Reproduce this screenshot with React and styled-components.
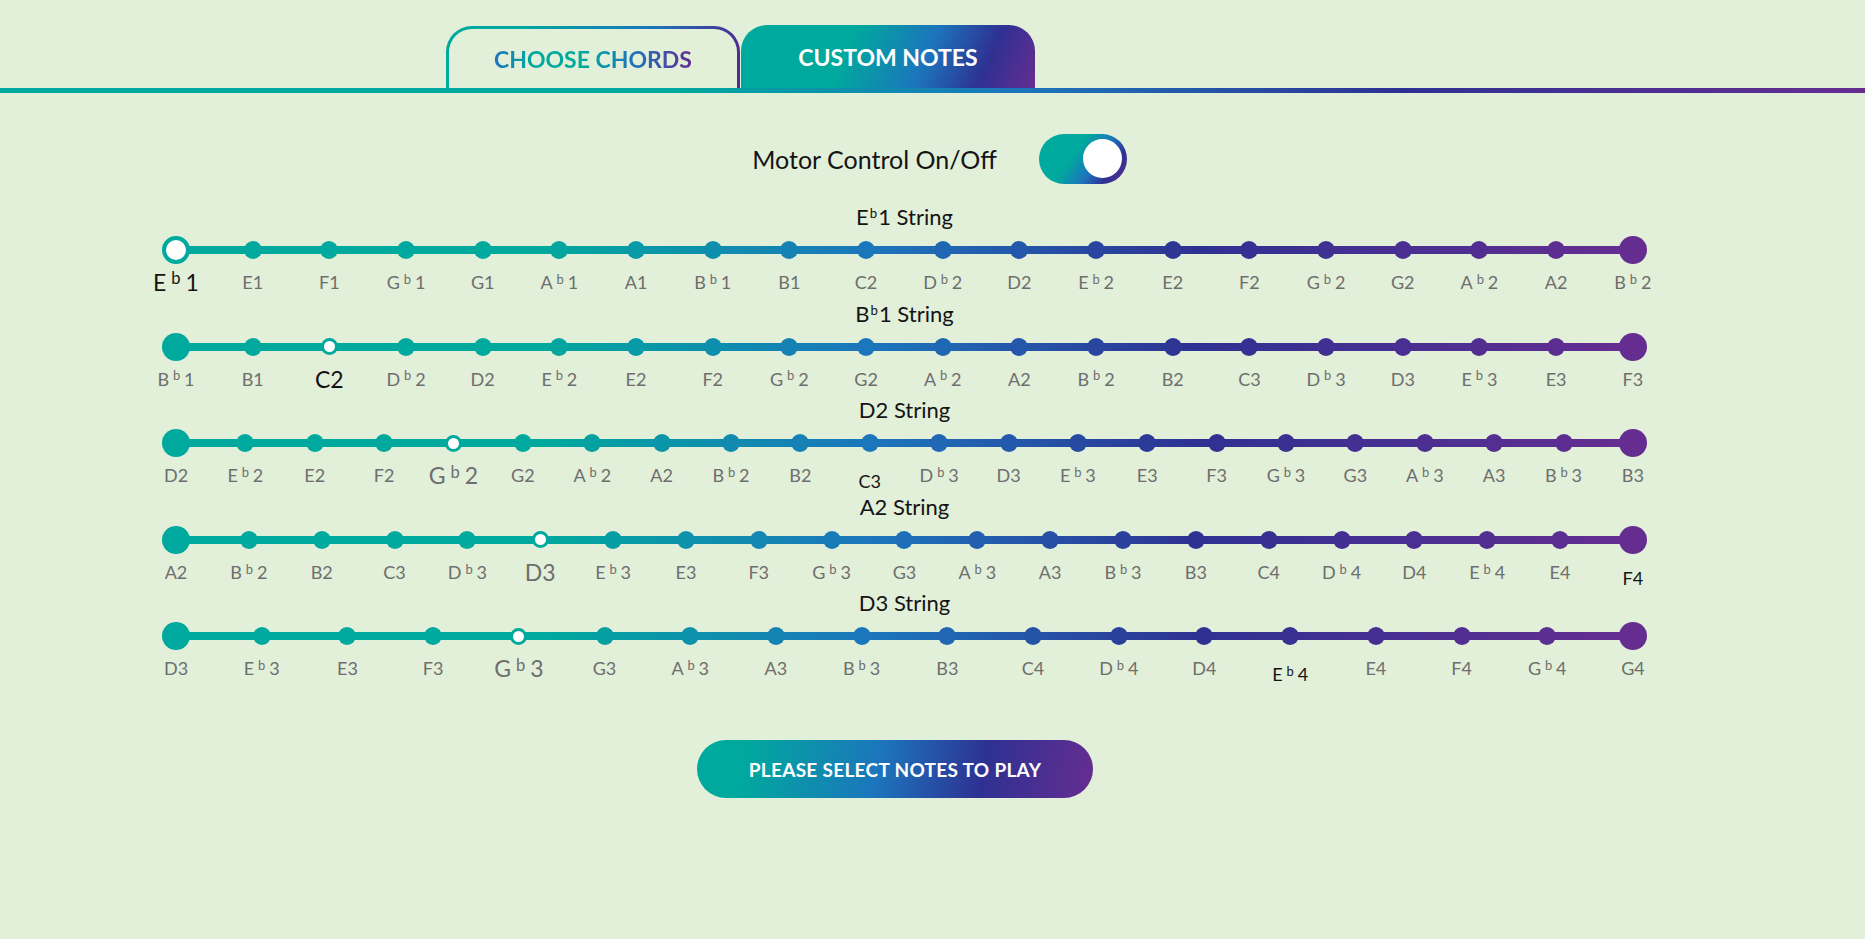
import React from 'react'
import styled, { createGlobalStyle } from 'styled-components'

const GlobalStyle = createGlobalStyle`
html, body {
  margin: 0;
  padding: 0;
  background: #e2efd9;
}
body {
  font-family: Lato, "Open Sans", "Liberation Sans", sans-serif;
}
`

const LINE_GRADIENT = 'linear-gradient(90deg, #00a99d 0%, #00a99d 25%, #1c75bc 48%, #2e3192 70%, #662d91 100%)'

const STOPS = [
  [0, [0, 169, 157]],
  [0.25, [0, 169, 157]],
  [0.48, [28, 117, 188]],
  [0.7, [46, 49, 146]],
  [1, [102, 45, 145]],
]

function colorAt(t) {
  for (let i = 1; i < STOPS.length; i++) {
    const [t1, c1] = STOPS[i]
    const [t0, c0] = STOPS[i - 1]
    if (t <= t1) {
      const f = t1 === t0 ? 0 : (t - t0) / (t1 - t0)
      const c = c0.map((v, k) => Math.round(v + (c1[k] - v) * f))
      return `rgb(${c[0]}, ${c[1]}, ${c[2]})`
    }
  }
  return 'rgb(102, 45, 145)'
}

const Page = styled.div`
min-height: 939px;
background: #e2efd9;
`
const TabBar = styled.div`
display: flex;
align-items: flex-end;
gap: 1px;
padding: 25px 0 0 446px;
`
const Tab = styled.div`
box-sizing: border-box;
width: 294px;
height: ${p => (p.$active ? 63 : 62)}px;
border-radius: 26px 26px 0 0;
display: flex;
align-items: center;
justify-content: center;
font-size: 23px;
font-weight: 700;
cursor: pointer;
color: #fff;
border: ${p => (p.$active ? 'none' : '3px solid transparent')};
border-bottom: none;
background: ${p =>
  p.$active
    ? 'linear-gradient(112deg, #00a99d 36%, #1c75bc 62%, #2e3192 82%, #662d91 100%)'
    : 'linear-gradient(#e2efd9, #e2efd9) padding-box, linear-gradient(90deg, #00a99d 25%, #1c75bc 70%, #4b2e91 100%) border-box'};
`
const GradientText = styled.span`
background: linear-gradient(90deg, #1c75bc 0%, #00a99d 20%, #00a99d 45%, #1c75bc 70%, #662d91 100%);
-webkit-background-clip: text;
background-clip: text;
color: transparent;
`
const Divider = styled.div`
height: 5px;
background: linear-gradient(90deg, #00a99d 0%, #00a99d 36%, #1c75bc 55%, #2e3192 75%, #662d91 100%);
`
const MotorRow = styled.div`
display: flex;
align-items: center;
justify-content: center;
gap: 42px;
margin-top: 41px;
padding-left: 14px;
height: 49px;
`
const MotorLabel = styled.span`
font-size: 25px;
color: #141414;
`
const Toggle = styled.div`
box-sizing: border-box;
width: 88px;
height: 50px;
border-radius: 25px;
padding-right: 5px;
display: flex;
align-items: center;
justify-content: flex-end;
background: linear-gradient(125deg, #00a99d 40%, #1c75bc 62%, #2e3192 80%, #662d91 100%);
cursor: pointer;
`
const Knob = styled.div`
width: 39px;
height: 39px;
border-radius: 50%;
background: #fff;
`
const Content = styled.div`
margin-left: 162px;
width: 1485px;
`
const Strings = styled.div`
display: flex;
flex-direction: column;
gap: 7.6px;
margin-top: 22px;
`
const StringBlock = styled.div`
display: flex;
flex-direction: column;
`
const Title = styled.div`
text-align: center;
font-size: 22px;
line-height: 24px;
height: 24px;
margin-bottom: 7px;
color: #141414;
`
const TitleFlat = styled.span`
position: relative;
top: -0.5em;
font-size: 0.6em;
margin: 0 1px;
`
const Track = styled.div`
display: flex;
justify-content: space-between;
background: ${LINE_GRADIENT} 14px 10px / calc(100% - 28px) 8px no-repeat;
`
const Stop = styled.div`
width: 28px;
display: flex;
flex-direction: column;
align-items: center;
cursor: pointer;
`
const DotSlot = styled.div`
width: 28px;
height: 28px;
display: flex;
align-items: center;
justify-content: center;
`
const Dot = styled.div`
box-sizing: border-box;
flex: none;
width: ${p => p.$size}px;
height: ${p => p.$size}px;
border-radius: 50%;
border-style: solid;
border-width: ${p => (p.$selected ? (p.$size > 20 ? 4 : 3) : 0)}px;
`
const Label = styled.div`
margin-top: 6px;
height: 24px;
line-height: 24px;
white-space: nowrap;
font-size: ${p => (p.$big ? 23 : 18)}px;
color: ${p => (p.$dark ? '#141414' : '#6e6e6e')};
transform: translateY(${p => (p.$marked ? 6 : 0)}px);
`
const Flat = styled.span`
position: relative;
top: -0.4em;
font-size: 0.72em;
margin: 0 0.3em;
`
const ButtonRow = styled.div`
display: flex;
justify-content: center;
padding-right: 19px;
margin-top: 60px;
`
const PlayButton = styled.button`
width: 396px;
height: 58px;
border: none;
border-radius: 29px;
background: linear-gradient(100deg, #00a99d 12%, #1c75bc 46%, #2e3192 72%, #662d91 100%);
color: #fff;
font-family: Lato, "Open Sans", sans-serif;
font-size: 19px;
font-weight: 700;
letter-spacing: 0.3px;
cursor: pointer;
`

const strings = [
  {
    name: 'Eb1',
    notes: 'Eb1 E1 F1 Gb1 G1 Ab1 A1 Bb1 B1 C2 Db2 D2 Eb2 E2 F2 Gb2 G2 Ab2 A2 Bb2',
    selected: 0,
    darkSelected: true,
  },
  {
    name: 'Bb1',
    notes: 'Bb1 B1 C2 Db2 D2 Eb2 E2 F2 Gb2 G2 Ab2 A2 Bb2 B2 C3 Db3 D3 Eb3 E3 F3',
    selected: 2,
    darkSelected: true,
  },
  {
    name: 'D2',
    notes: 'D2 Eb2 E2 F2 Gb2 G2 Ab2 A2 Bb2 B2 C3 Db3 D3 Eb3 E3 F3 Gb3 G3 Ab3 A3 Bb3 B3',
    selected: 4,
    marked: 10,
  },
  {
    name: 'A2',
    notes: 'A2 Bb2 B2 C3 Db3 D3 Eb3 E3 F3 Gb3 G3 Ab3 A3 Bb3 B3 C4 Db4 D4 Eb4 E4 F4',
    selected: 5,
    marked: 20,
  },
  {
    name: 'D3',
    notes: 'D3 Eb3 E3 F3 Gb3 G3 Ab3 A3 Bb3 B3 C4 Db4 D4 Eb4 E4 F4 Gb4 G4',
    selected: 4,
    marked: 13,
  },
]

function NoteName({ note }) {
  const flat = note[1] === 'b'
  return (
    <>
      {note[0]}
      {flat && <Flat>b</Flat>}
      {note.slice(flat ? 2 : 1)}
    </>
  )
}

function GuitarString({ data }) {
  const notes = data.notes.split(' ')
  const last = notes.length - 1
  const flat = data.name[1] === 'b'
  return (
    <StringBlock>
      <Title>
        {data.name[0]}
        {flat && <TitleFlat>b</TitleFlat>}
        {data.name.slice(flat ? 2 : 1)} String
      </Title>
      <Track>
        {notes.map((note, i) => {
          const color = colorAt(i / last)
          const end = i === 0 || i === last
          const selected = i === data.selected
          const size = end ? 28 : selected ? 17 : 18
          return (
            <Stop key={note + i}>
              <DotSlot>
                <Dot
                  $size={size}
                  $selected={selected}
                  style={{ background: selected ? '#fff' : color, borderColor: color }}
                />
              </DotSlot>
              <Label
                $big={selected}
                $dark={(selected && data.darkSelected) || i === data.marked}
                $marked={i === data.marked}
              >
                <NoteName note={note} />
              </Label>
            </Stop>
          )
        })}
      </Track>
    </StringBlock>
  )
}

function App() {
  return (
    <Page>
      <GlobalStyle />
      <TabBar>
        <Tab>
          <GradientText>CHOOSE CHORDS</GradientText>
        </Tab>
        <Tab $active>CUSTOM NOTES</Tab>
      </TabBar>
      <Divider />

      <MotorRow>
        <MotorLabel>Motor Control On/Off</MotorLabel>
        <Toggle>
          <Knob />
        </Toggle>
      </MotorRow>

      <Content>
        <Strings>
          {strings.map(s => (
            <GuitarString key={s.name} data={s} />
          ))}
        </Strings>
        <ButtonRow>
          <PlayButton>PLEASE SELECT NOTES TO PLAY</PlayButton>
        </ButtonRow>
      </Content>
    </Page>
  )
}

export default App
